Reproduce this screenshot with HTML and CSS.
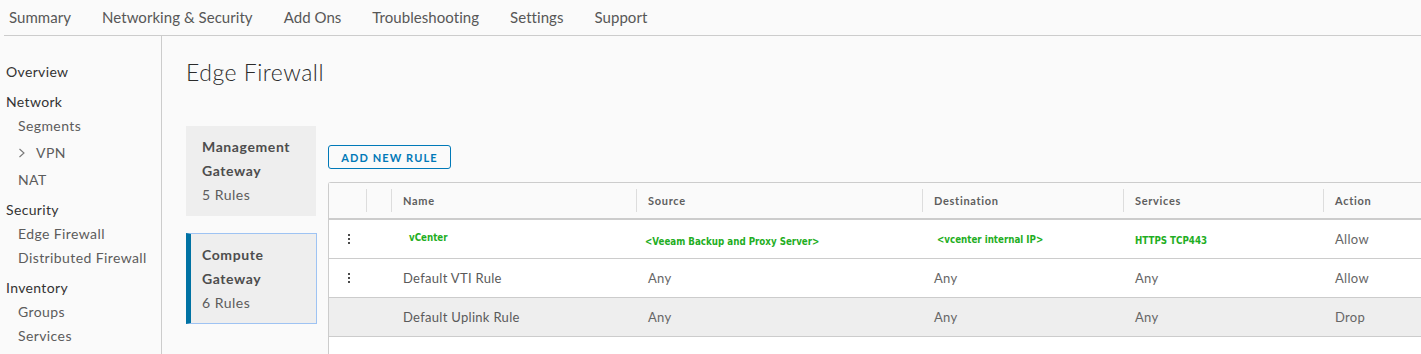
FILE: index.html
```html
<!DOCTYPE html>
<html>
<head>
<meta charset="utf-8">
<link rel="stylesheet" href="styles.css">
</head>
<body>
<header class="topnav">
  <span class="tab">Summary</span>
  <span class="tab">Networking &amp; Security</span>
  <span class="tab">Add Ons</span>
  <span class="tab">Troubleshooting</span>
  <span class="tab">Settings</span>
  <span class="tab">Support</span>
</header>
<div class="layout">
  <nav class="sidebar">
    <div class="sec first">Overview</div>
    <div class="sec">Network</div>
    <div class="item">Segments</div>
    <div class="item vpn"><svg class="chev" width="8" height="10" viewBox="0 0 8 10"><path d="M1.5 1 L6 5 L1.5 9" fill="none" stroke="#777" stroke-width="1.1"/></svg><span>VPN</span></div>
    <div class="item">NAT</div>
    <div class="sec">Security</div>
    <div class="item">Edge Firewall</div>
    <div class="item">Distributed Firewall</div>
    <div class="sec">Inventory</div>
    <div class="item">Groups</div>
    <div class="item">Services</div>
  </nav>
  <main class="main">
    <h1 class="title">Edge Firewall</h1>
    <div class="content">
      <div class="gateways">
        <div class="gw">
          <div class="gw-name">Management</div>
          <div class="gw-name">Gateway</div>
          <div class="gw-count">5 Rules</div>
        </div>
        <div class="gw active">
          <div class="gw-name">Compute</div>
          <div class="gw-name">Gateway</div>
          <div class="gw-count">6 Rules</div>
        </div>
      </div>
      <div class="rules">
        <button class="btn">ADD NEW RULE</button>
        <div class="grid">
          <div class="row head">
            <div class="c c1"></div>
            <div class="c c2 sep"></div>
            <div class="c cn sep">Name</div>
            <div class="c cs sep">Source</div>
            <div class="c cd sep">Destination</div>
            <div class="c cv sep">Services</div>
            <div class="c ca sep">Action</div>
          </div>
          <div class="row">
            <div class="c c1"><span class="kebab"><i></i><i></i><i></i></span></div>
            <div class="c c2"></div>
            <div class="c cn"><span class="green up2 nudge">vCenter</span></div>
            <div class="c cs"><span class="green down2">&lt;Veeam Backup and Proxy Server&gt;</span></div>
            <div class="c cd"><span class="green">&lt;vcenter internal IP&gt;</span></div>
            <div class="c cv"><span class="green down1">HTTPS TCP443</span></div>
            <div class="c ca"><span class="up2">Allow</span></div>
          </div>
          <div class="row">
            <div class="c c1"><span class="kebab"><i></i><i></i><i></i></span></div>
            <div class="c c2"></div>
            <div class="c cn name">Default VTI Rule</div>
            <div class="c cs">Any</div>
            <div class="c cd">Any</div>
            <div class="c cv">Any</div>
            <div class="c ca">Allow</div>
          </div>
          <div class="row shaded">
            <div class="c c1"></div>
            <div class="c c2"></div>
            <div class="c cn name">Default Uplink Rule</div>
            <div class="c cs">Any</div>
            <div class="c cd">Any</div>
            <div class="c cv">Any</div>
            <div class="c ca">Drop</div>
          </div>
        </div>
      </div>
    </div>
  </main>
</div>
</body>
</html>
```
FILE: styles.css
```css
html, body {
  margin: 0;
  padding: 0;
  background: #fafafa;
  overflow: hidden;
  width: 1421px;
  height: 354px;
}
body {
  font-family: Lato, "Open Sans", sans-serif;
  color: #333;
}
.topnav {
  height: 36px;
  border-bottom: 1px solid #cccccc;
  margin-left: 4px;
  display: flex;
  align-items: center;
  gap: 31px;
  padding-left: 5px;
  padding-bottom: 1px;
  box-sizing: border-box;
}
.tab {
  font-size: 15px;
  color: #575757;
  line-height: 20px;
  letter-spacing: 0.05px;
}
.layout {
  display: flex;
  height: 318px;
}
.sidebar {
  width: 161px;
  border-right: 1px solid #cccccc;
  padding-top: 24px;
  flex: none;
}
.sec {
  font-size: 14px;
  line-height: 24px;
  color: #333;
  padding-left: 6px;
  margin-top: 6px;
  letter-spacing: 0.35px;
}
.sec.first { margin-top: 0; }
.item {
  font-size: 14px;
  line-height: 24px;
  color: #5c5c5c;
  padding-left: 18px;
  letter-spacing: 0.4px;
}
.item.vpn {
  height: 30px;
  display: flex;
  align-items: center;
  gap: 10px;
}
.chev { flex: none; }
.main {
  flex: 1;
  padding-left: 24px;
  min-width: 0;
}
.title {
  margin: 24px 0 0 0;
  font-size: 23px;
  font-weight: 300;
  line-height: 24px;
  color: #2b2b2b;
  letter-spacing: 0.5px;
}
.content {
  display: flex;
  margin-top: 42px;
  gap: 11px;
}
.gateways {
  width: 131px;
  flex: none;
  display: flex;
  flex-direction: column;
  gap: 17px;
}
.gw {
  width: 130px;
  height: 90px;
  box-sizing: border-box;
  background: #eeeeee;
  padding: 9px 0 0 16px;
}
.gw.active {
  width: 131px;
  height: 91px;
  border: 1px solid #9ec3f3;
  border-left: 5px solid #0072a3;
  padding-left: 11px;
  padding-top: 9px;
}
.gw-name {
  font-size: 14px;
  font-weight: 700;
  line-height: 24px;
  color: #4d4d4d;
  letter-spacing: 0.6px;
}
.gw-count {
  font-size: 14px;
  line-height: 24px;
  color: #5c5c5c;
  letter-spacing: 0.5px;
}
.rules {
  padding-top: 19px;
  width: 1120px;
  flex: none;
}
.btn {
  display: block;
  height: 24px;
  width: 123px;
  border: 1px solid #0079b8;
  border-radius: 3px;
  background: #fafafa;
  color: #0079b8;
  font-family: Lato, sans-serif;
  font-size: 11px;
  font-weight: 700;
  letter-spacing: 1.1px;
  padding: 0;
  margin: 0;
}
.grid {
  margin-top: 13px;
  border-top: 1px solid #cccccc;
  border-left: 1px solid #cccccc;
  border-radius: 3px 0 0 0;
  background: #ffffff;
  height: 180px;
}
.row {
  display: flex;
  height: 39px;
  border-bottom: 1px solid #cccccc;
  box-sizing: border-box;
  background: #ffffff;
}
.row.head {
  height: 37px;
  border-bottom: 2px solid #cccccc;
  background: #fafafa;
}
.row.shaded { background: #eeeeee; }
.c {
  flex: none;
  display: flex;
  align-items: center;
  padding-left: 12px;
  box-sizing: border-box;
  font-size: 13px;
  color: #666;
  position: relative;
  letter-spacing: 0.3px;
}
.head .c {
  font-size: 11px;
  font-weight: 700;
  color: #5e5e5e;
  letter-spacing: 0.7px;
  padding-bottom: 1px;
}
.head .sep::before {
  content: "";
  position: absolute;
  left: 0;
  top: 6px;
  bottom: 6px;
  width: 1px;
  background: #dddddd;
}
.c1 { width: 37px; padding-left: 0; justify-content: center; }
.c2 { width: 25px; }
.cn { width: 245px; }
.cs { width: 286px; }
.cd { width: 201px; }
.cv { width: 200px; }
.ca { width: 160px; }
.name { color: #5a5a5a; }
.kebab {
  display: flex;
  flex-direction: column;
  gap: 2px;
  margin-left: 3px;
}
.kebab i {
  display: block;
  width: 2px;
  height: 2px;
  background: #4a4a4a;
}
.green {
  font-family: "DejaVu Sans Condensed", "DejaVu Sans", sans-serif;
  font-stretch: condensed;
  font-weight: 700;
  font-size: 9.7px;
  letter-spacing: 0;
  color: #1fae24;
  position: relative;
}
.nudge { margin-left: 6px; }
.up2 { top: -2px; }
.down2 { top: 2px; }
.down1 { top: 1px; }
.cd .green { margin-left: 3px; }
.cs .green { margin-left: -3px; }
```
